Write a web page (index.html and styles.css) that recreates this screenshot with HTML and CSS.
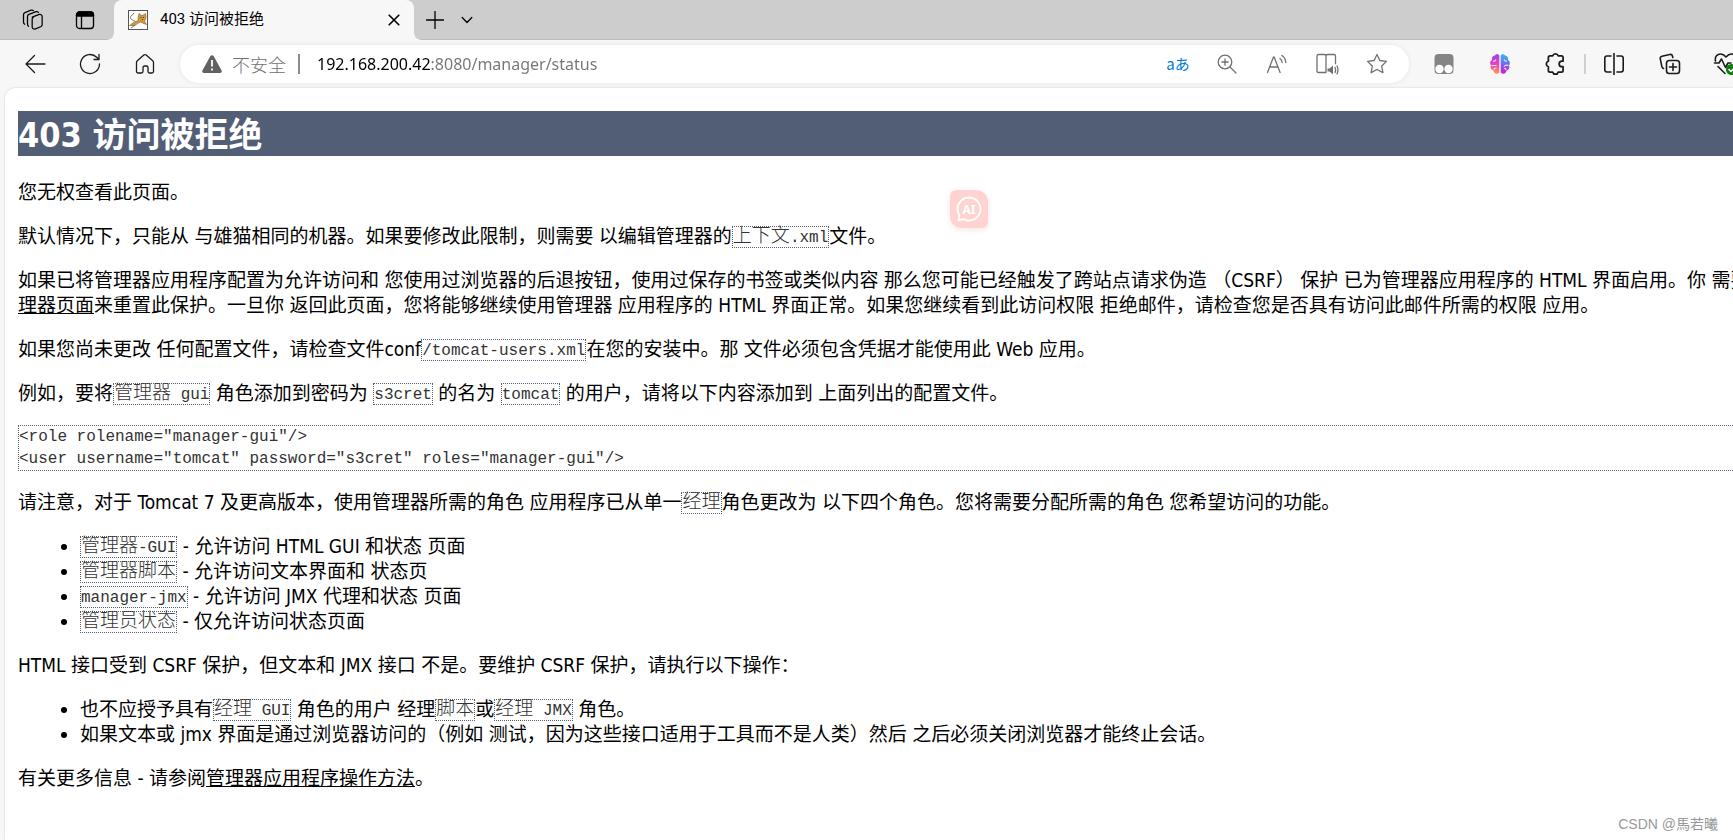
FILE: index.html
```html
<!DOCTYPE html>
<html lang="zh-CN">
<head>
<meta charset="utf-8">
<title>403 访问被拒绝</title>
<link rel="stylesheet" href="styles.css">
</head>
<body>
<header class="tabstrip">
  <button class="strip-btn" aria-label="工作区">
    <svg width="24" height="24" viewBox="0 0 24 24" class="ico"><path d="M10.5 8.5 18 5.7c1.2-.4 3 .5 3 2v9c0 1-.5 1.600-1.500 2l-5.500 2.200c-1.600.6-3.500-.4-3.500-2V10.500c0-1 .5-1.600 1.500-2z" transform="translate(1.200 1) scale(.95)"/><path d="M7.600 18.200C6.700 17.700 6.500 17 6.500 16V8.500c0-1 .5-1.700 1.500-2.100l7-2.700c.8-.3 1.700-.1 2.300.5"/><path d="M3.700 16.200C2.800 15.700 2.500 15 2.500 14V6.800c0-1 .5-1.700 1.500-2.100l6-2.500c.9-.3 1.700-.1 2.300.4"/></svg>
  </button>
  <button class="strip-btn" aria-label="标签操作菜单">
    <svg width="20" height="20" viewBox="0 0 20 20" class="ico"><rect x="1.500" y="2" width="17" height="16.500" rx="3"/><path d="M1.500 6V5a3 3 0 0 1 3-3h11a3 3 0 0 1 3 3v1z" class="solid"/><path d="M6.500 6v12"/></svg>
  </button>
  <div class="tab">
    <svg class="favicon" width="20" height="20" viewBox="0 0 20 20"><rect x=".5" y=".5" width="19" height="19" fill="#fff" stroke="#555"/><path d="M1.500 15.500c2-1 3.500-3.500 6-4l3-1c-1-2 0-4 .5-7l2 1.800h2L17.500 3.500c.8 3 .6 5.500-1 7.500l2 3.500-3-1-2.500-1.500c-3 .5-4 2.500-6.500 3.500z" fill="#d39a3c" stroke="#7d5a20" stroke-width=".6"/><path d="M7 11C3 10 1.500 8 3 6s3-1 2.500-3M3 18l4-3" fill="none" stroke="#555" stroke-width=".8"/><path d="M12.500 7.500h1m1.500 0h1m-2 2h1" stroke="#333" stroke-width=".9"/></svg>
    <span class="tab-title">403 访问被拒绝</span>
    <button class="tab-close" aria-label="关闭标签页"><svg width="12" height="12" viewBox="0 0 12 12" class="ico bold"><path d="m1.200 1.200 9.600 9.600m0-9.600-9.600 9.600"/></svg></button>
  </div>
  <button class="new-tab" aria-label="新建标签页"><svg width="18" height="18" viewBox="0 0 18 18" class="ico"><path d="M9 .5v17M.5 9h17"/></svg></button>
  <button class="tab-menu" aria-label="标签页列表"><svg width="12" height="8" viewBox="0 0 12 8" class="ico"><path d="m1.200 1.500 4.800 5 4.800-5"/></svg></button>
</header>

<nav class="toolbar">
  <button class="nav-btn" aria-label="后退"><svg width="22" height="20" viewBox="0 0 22 20" class="ico"><path d="M10.500 1.500 2 10l8.500 8.500M2 10h19"/></svg></button>
  <button class="nav-btn" aria-label="刷新"><svg width="22" height="22" viewBox="0 0 22 22" class="ico"><path d="M20.500 11a9.500 9.500 0 1 1-2.800-6.700L20 6.500M20 1.500v5h-5"/></svg></button>
  <button class="nav-btn" aria-label="主页"><svg width="20" height="22" viewBox="0 0 20 22" class="ico"><path d="M1.500 9.300c0-.7.3-1.200.8-1.600l6.500-5.600c.7-.6 1.700-.6 2.400 0l6.500 5.600c.5.4.8.9.8 1.600v9.200c0 .9-.6 1.500-1.500 1.500h-2.500c-.9 0-1.500-.6-1.500-1.500v-4c0-.9-.6-1.500-1.500-1.500h-2c-.9 0-1.500.6-1.500 1.500v4c0 .9-.6 1.500-1.500 1.500H3c-.9 0-1.500-.6-1.500-1.500z"/></svg></button>
  <div class="omnibox">
    <svg width="20" height="18" viewBox="0 0 20 18"><path d="M8.400 1.100c.7-1.300 2.500-1.300 3.200 0l8 14.300c.6 1.200-.2 2.600-1.600 2.600H2c-1.400 0-2.200-1.400-1.600-2.600z" fill="#616161"/><path d="M10 5v6.500m0 2v2" stroke="#fff" stroke-width="1.800"/></svg>
    <span class="insecure">不安全</span>
    <span class="sep"></span>
    <input class="url" type="text" aria-label="地址" value="192.168.200.42:8080/manager/status">
    <button class="omni-btn translate" aria-label="翻译">aあ</button>
    <button class="omni-btn" aria-label="缩放"><svg width="20" height="20" viewBox="0 0 20 20" class="ico"><circle cx="8" cy="8" r="6.800"/><path d="M8 4.800v6.400M4.800 8h6.400M13 13l6 6"/></svg></button>
    <button class="omni-btn" aria-label="大声朗读"><svg width="22" height="20" viewBox="0 0 22 20" class="ico"><path d="M1.500 18.500 7.500 3h.6l6 15.500M3.800 13h8M14 4.500c1.300 1 2 2.200 2.200 4M16 1.500c2.400 1.700 3.600 4 3.800 7"/></svg></button>
    <button class="omni-btn" aria-label="沉浸式阅读器"><svg width="24" height="22" viewBox="0 0 24 22" class="ico"><path d="M11 2.500v16.500M11 19.500H3.500c-1 0-1.500-.5-1.500-1.500V3c0-1 .5-1.500 1.500-1.500h6c1 0 1.500.5 1.500 1.500 0-1 .5-1.500 1.500-1.500h6.500c1 0 1.500.5 1.500 1.500v7.500"/><path d="M12.500 15.500h2l3.500-3v9l-3.500-3h-2z" class="fill"/><path d="M20 14.500c.7 1.500.7 3.500 0 5M22 13c1.200 2.500 1.200 5.500 0 8"/></svg></button>
    <button class="omni-btn" aria-label="收藏"><svg width="22" height="22" viewBox="0 0 22 22" class="ico"><path d="m11 1.500 2.900 6 6.600.9-4.800 4.600 1.200 6.600L11 16.500l-5.900 3.100L6.300 13 1.500 8.400l6.600-.9z"/></svg></button>
  </div>
  <div class="extensions">
    <button class="ext-btn" aria-label="扩展"><svg width="20" height="22" viewBox="0 0 20 22"><rect x=".5" y="1" width="19" height="20" rx="4" fill="#858585"/><circle cx="5.500" cy="16" r="4.200" fill="#fff"/><circle cx="14.500" cy="16" r="4.200" fill="#fff"/></svg></button>
    <button class="ext-btn" aria-label="AI 助手"><svg width="20" height="22" viewBox="0 0 20 22"><defs><linearGradient id="bl" x1="0" y1="0" x2="0" y2="1"><stop offset="0" stop-color="#9d3df5"/><stop offset=".5" stop-color="#e843b8"/><stop offset="1" stop-color="#ff9a3c"/></linearGradient><linearGradient id="br" x1="0" y1="0" x2="0" y2="1"><stop offset="0" stop-color="#35b4ff"/><stop offset=".5" stop-color="#6b6cf5"/><stop offset="1" stop-color="#d31bd9"/></linearGradient></defs><path d="M9.300 2.500v17C7 22 3.500 20.500 3.500 17.500 1 17 0 14.500 1 12.500-.5 10.500 0 8 2 7 1.500 3.500 3.500 2.500 5 2.500c1-1.700 3.500-1.500 4.300 0z" fill="url(#bl)"/><path d="M10.700 2.500v17c2.300 2.500 5.800 1 5.800-2 2.500-.5 3.500-3 2.500-5 1.500-2 1-4.500-1-5.500.5-3.500-1.500-4.500-3-4.500-1-1.700-3.500-1.500-4.300 0z" fill="url(#br)"/><path d="M3 8c1.500.5 2.500 0 3-1.500M1.500 12.500h5M4 17c0-1.500 1-2.200 2.500-2M17 8c-1.500.5-2.500 0-3-1.500M18.500 12.500c-2-.8-3.500-.5-4.500 1M16 17c0-1-.8-1.700-2-1.700" fill="none" stroke="#f7d9ff" stroke-width="1.100"/></svg></button>
    <button class="ext-btn" aria-label="扩展菜单"><svg width="24" height="24" viewBox="0 0 22 22" class="ico bold"><path d="M8 3.500a2.600 2.600 0 0 1 5 0h3c1 0 1.500.5 1.500 1.500v3.300h-1a2.600 2.600 0 0 0 0 5.200h1V17c0 1-.5 1.500-1.500 1.500h-3a2.600 2.600 0 0 1-5 0H5.500c-1 0-1.500-.5-1.500-1.500v-3.500a2.600 2.600 0 0 1 0-5V5c0-1 .5-1.500 1.500-1.500z"/></svg></button>
    <span class="divider"></span>
    <button class="ext-btn" aria-label="分屏"><svg width="22" height="22" viewBox="0 0 22 22" class="ico bold"><path d="M11 .5v21M8 3H4C2.700 3 1.800 3.900 1.800 5.200v11.600C1.800 18.100 2.700 19 4 19h4M14 3h4c1.300 0 2.200.9 2.200 2.200v11.600c0 1.300-.9 2.200-2.200 2.200h-4"/></svg></button>
    <button class="ext-btn" aria-label="集锦"><svg width="22" height="22" viewBox="0 0 22 22" class="ico bold"><path d="M4.500 15.500C3.400 15 3 14.300 2.800 13.300L1.300 5.800C1 4.500 1.700 3.500 3 3.200l7.800-1.700c1.400-.3 2.400.4 2.700 1.700l.3 1.300"/><rect x="7.500" y="7.500" width="13" height="13" rx="2.800"/><path d="M14 10.500v7M10.500 14h7"/></svg></button>
    <button class="ext-btn" aria-label="浏览器概要"><svg width="26" height="24" viewBox="0 0 26 24" class="ico bold"><path d="M2.500 9C1.500 4.500 4.500 2 7.500 2c2.500 0 4 1.200 5.500 3 1.500-1.800 3-3 5.500-3 3 0 6 2.500 5 7M1.500 11h4.500l2.500-4 4 8.500 2.500-4.500h3M5 14.500l7 7"/><circle cx="18.500" cy="17.500" r="5.500" fill="#0f7b0f" stroke="none"/><path d="m16 17.500 2 2 3.200-3.500" class="check"/></svg></button>
  </div>
</nav>

<div class="viewport">
  <main class="page">
    <h1 class="headline">403 访问被拒绝</h1>
    <p>您无权查看此页面。</p>
    <p>默认情况下，只能从 与雄猫相同的机器。如果要修改此限制，则需要 以编辑管理器的<code>上下文<span class="latin">.xml</span></code>文件。</p>
    <p>如果已将管理器应用程序配置为允许访问和 您使用过浏览器的后退按钮，使用过保存的书签或类似内容 那么您可能已经触发了跨站点请求伪造 （CSRF） 保护 已为管理器应用程序的 HTML 界面启用。你 需要通<br><a href="#">理器页面</a>来重置此保护。一旦你 返回此页面，您将能够继续使用管理器 应用程序的 HTML 界面正常。如果您继续看到此访问权限 拒绝邮件，请检查您是否具有访问此邮件所需的权限 应用。</p>
    <p>如果您尚未更改 任何配置文件，请检查文件conf<code><span class="latin">/tomcat-users.xml</span></code>在您的安装中。那 文件必须包含凭据才能使用此 Web 应用。</p>
    <p>例如，要将<code>管理器<span class="latin"> gui</span></code> 角色添加到密码为 <code><span class="latin">s3cret</span></code> 的名为 <code><span class="latin">tomcat</span></code> 的用户，请将以下内容添加到 上面列出的配置文件。</p>
    <pre class="sample">&lt;role rolename="manager-gui"/&gt;
&lt;user username="tomcat" password="s3cret" roles="manager-gui"/&gt;</pre>
    <p>请注意，对于 Tomcat 7 及更高版本，使用管理器所需的角色 应用程序已从单一<code>经理</code>角色更改为 以下四个角色。您将需要分配所需的角色 您希望访问的功能。</p>
    <ul>
      <li><code>管理器<span class="latin">-GUI</span></code> - 允许访问 HTML GUI 和状态 页面</li>
      <li><code>管理器脚本</code> - 允许访问文本界面和 状态页</li>
      <li><code><span class="latin">manager-jmx</span></code> - 允许访问 JMX 代理和状态 页面</li>
      <li><code>管理员状态</code> - 仅允许访问状态页面</li>
    </ul>
    <p>HTML 接口受到 CSRF 保护，但文本和 JMX 接口 不是。要维护 CSRF 保护，请执行以下操作：</p>
    <ul>
      <li>也不应授予具有<code>经理<span class="latin"> GUI</span></code> 角色的用户 经理<code>脚本</code>或<code>经理<span class="latin"> JMX</span></code> 角色。</li>
      <li>如果文本或 jmx 界面是通过浏览器访问的（例如 测试，因为这些接口适用于工具而不是人类）然后 之后必须关闭浏览器才能终止会话。</li>
    </ul>
    <p>有关更多信息 - 请参阅<a href="#">管理器应用程序操作方法</a>。</p>
  </main>
  <button class="ai-badge" aria-label="AI"><svg width="26" height="26" viewBox="0 0 26 26"><path d="M13 1.500A11.500 11.500 0 1 1 7.500 23.100L2.500 24.300l.8-5.200A11.500 11.500 0 0 1 13 1.500z" fill="none" stroke="#fff" stroke-width="1.800"/><text x="13" y="17.500" text-anchor="middle" class="ai-text">AI</text></svg></button>
  <span class="watermark">CSDN @馬若曦</span>
</div>
</body>
</html>
```
FILE: styles.css
```css
* { box-sizing: border-box; }
body {
  margin: 0;
  min-height: 100vh;
  display: flex;
  flex-direction: column;
  overflow: hidden;
  background: #f7f7f7;
  color: #000;
  font-family: "Noto Sans", "Noto Sans CJK SC", sans-serif;
}
button {
  display: flex;
  align-items: center;
  justify-content: center;
  flex: none;
  padding: 0;
  border: 0;
  background: none;
  color: inherit;
  font: inherit;
}
.ico { fill: none; stroke: currentColor; stroke-width: 1.3; stroke-linecap: round; stroke-linejoin: round; }
.bold { stroke-width: 1.6; }
.ico .solid { fill: currentColor; }
.ico .fill { fill: currentColor; stroke: none; }
.ico .check { stroke: #fff; stroke-width: 1.5; }

/* Tab strip */
.tabstrip {
  display: flex;
  flex: none;
  height: 40px;
  padding-left: 7px;
  background: #cdcdcd;
  box-shadow: inset 0 -1px 0 #bdbdbd;
}
.strip-btn { width: 52px; }
.tab {
  position: relative;
  display: flex;
  align-items: center;
  width: 300px;
  margin-left: 3px;
  padding: 0 14px;
  background: #f7f7f7;
  border-radius: 8px 8px 0 0;
}
.tab::before, .tab::after {
  content: "";
  position: absolute;
  bottom: 0;
  width: 6px;
  height: 6px;
}
.tab::before { right: 100%; background: radial-gradient(circle at 0 0, #cdcdcd 5px, #f7f7f7 6px); }
.tab::after { left: 100%; background: radial-gradient(circle at 100% 0, #cdcdcd 5px, #f7f7f7 6px); }
.tab-title {
  flex: 1;
  margin-left: 12px;
  font-family: Roboto, "Noto Sans CJK SC", sans-serif;
  font-size: 15px;
  line-height: 20px;
  padding-bottom: 2px;
}
.new-tab { width: 42px; }
.tab-menu { width: 22px; }

/* Toolbar */
.toolbar {
  display: flex;
  flex: none;
  align-items: center;
  height: 48px;
  padding-left: 7px;
  color: #1b1b1b;
}
.nav-btn { width: 55px; height: 40px; }
.omnibox {
  display: flex;
  align-items: center;
  flex: 1;
  min-width: 0;
  height: 38px;
  margin: 0 7px 0 8px;
  padding: 0 7px 0 22px;
  border-radius: 19px;
  background: #fff;
  box-shadow: 0 0 5px #e6e6e6;
  color: #707070;
}
.insecure { margin-left: 10px; font-size: 18px; font-weight: 300; }
.sep { width: 2px; height: 20px; margin: 0 17px 0 12px; background: #8a8a8a; }
.url {
  flex: 1;
  min-width: 0;
  padding: 0;
  border: 0;
  outline: 0;
  font-family: "Noto Sans", sans-serif;
  font-size: 16px;
  line-height: 26px;
  background: linear-gradient(90deg, #000 114px, #757575 114px);
  -webkit-background-clip: text;
  background-clip: text;
  -webkit-text-fill-color: transparent;
}
.omni-btn { width: 50px; height: 32px; }
.translate { padding: 0 0 2px 2px; color: #0078d4; font-family: "Noto Sans CJK JP", sans-serif; font-size: 15px; }
.extensions { display: flex; align-items: center; flex: none; margin-right: -21px; }
.ext-btn { width: 56px; height: 40px; }
.divider { width: 2px; height: 20px; background: #cfcfcf; }

/* Page */
.viewport {
  position: relative;
  flex: 1;
  margin-left: 5px;
  border-radius: 10px 0 0 0;
  background: #fff;
  box-shadow: 0 0 2px #c4c4c4;
}
.page {
  padding: 23px 0 0 13px;
  overflow: hidden;
  white-space: nowrap;
  font-family: "DejaVu Sans Condensed", "Noto Sans CJK SC", sans-serif;
  font-size: 19px;
  line-height: 25px;
}
.headline {
  margin: 0 0 24px;
  padding-top: 3px;
  background: #525d76;
  color: #fff;
  font-size: 34px;
  font-weight: bold;
  line-height: 42px;
}
.page p, .page ul { margin: 0 0 19px; }
.page ul { padding-left: 62px; }
.page a { color: #000; }
.page code, .sample {
  border: 1px dotted #525d76;
  color: #333;
  font-family: "Liberation Mono", "Noto Sans CJK SC", monospace;
  font-weight: 300;
}
.page code {
  display: inline-block;
  height: 22px;
  margin-bottom: 1px;
  font-size: 19px;
  line-height: 20px;
  vertical-align: bottom;
}
.latin, .sample { font-size: 16px; }
.sample { margin: 0 0 19px; border-right: 0; line-height: 22px; }

.ai-badge {
  position: absolute;
  top: 102px;
  left: 945px;
  width: 38px;
  height: 38px;
  border-radius: 6px 12px;
  background: #ffd3d0;
  box-shadow: 0 2px 6px #f6e6e5;
}
.ai-text { fill: #fff; font: bold 12px "Noto Sans", sans-serif; }
.watermark {
  position: absolute;
  right: 15px;
  bottom: 6px;
  color: #999;
  font-family: "Liberation Sans", "Noto Sans CJK TC", sans-serif;
  font-size: 14px;
  line-height: 20px;
}
```
